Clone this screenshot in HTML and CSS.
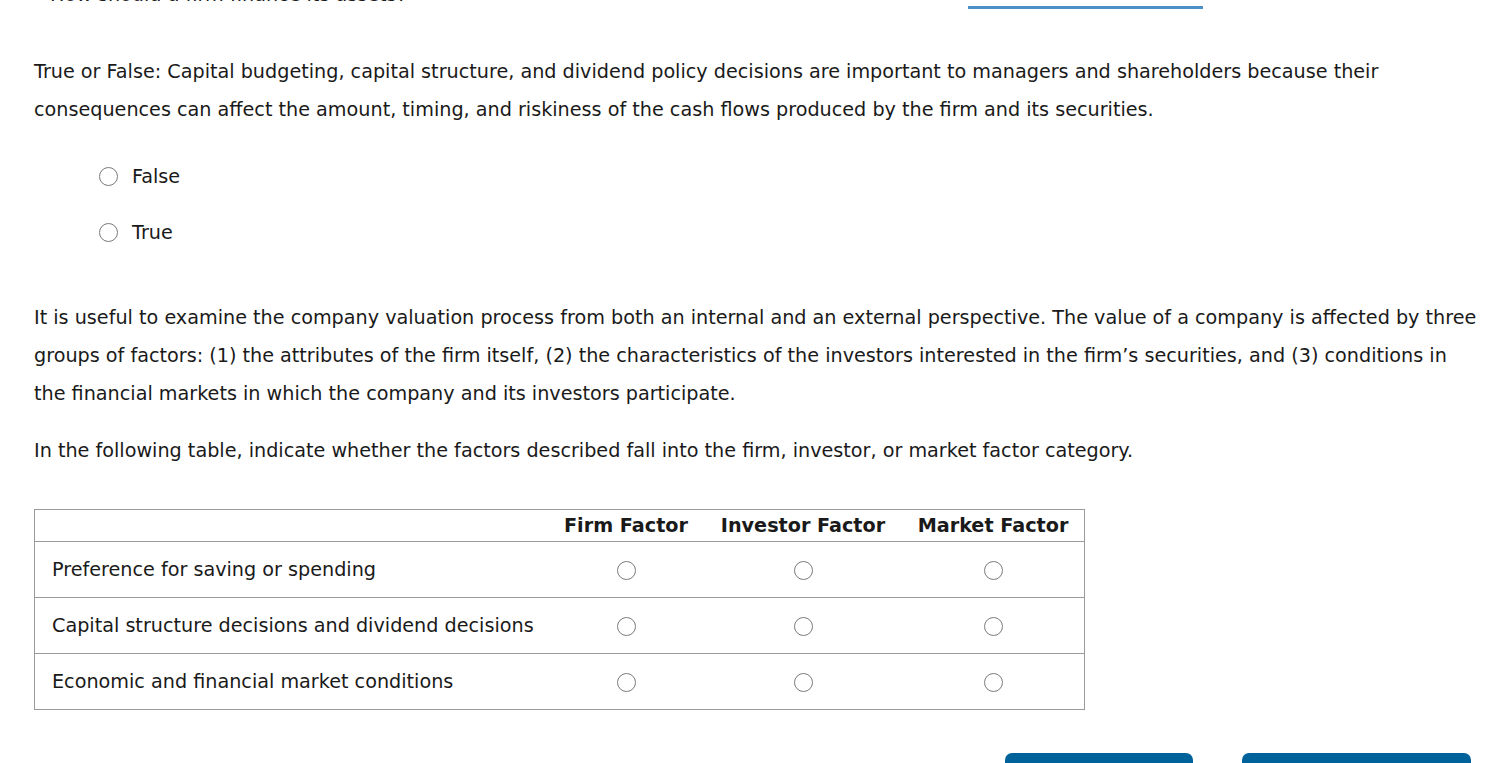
FILE: index.html
```html
<!DOCTYPE html>
<html lang="en">
<head>
<meta charset="utf-8">
<title>Valuation factors</title>
<link rel="stylesheet" href="styles.css">
</head>
<body>
<div class="page">
  <div class="prev">
    <span class="prev-q">How should a firm finance its assets?</span>
    <span class="tab-line"></span>
  </div>

  <div class="question first">
    <p class="stem">True or False: Capital budgeting, capital structure, and dividend policy decisions are important to managers and shareholders because their consequences can affect the amount, timing, and riskiness of the cash flows produced by the firm and its securities.</p>
    <div class="choices">
      <label class="choice"><span class="radio"></span><span>False</span></label>
      <label class="choice"><span class="radio"></span><span>True</span></label>
    </div>
  </div>

  <div class="question second">
    <p class="stem">It is useful to examine the company valuation process from both an internal and an external perspective. The value of a company is affected by three groups of factors: (1) the attributes of the firm itself, (2) the characteristics of the investors interested in the firm’s securities, and (3) conditions in the financial markets in which the company and its investors participate.</p>
    <p class="stem instr">In the following table, indicate whether the factors described fall into the firm, investor, or market factor category.</p>

    <table class="factors">
      <thead>
        <tr>
          <th class="c-label"></th>
          <th class="c-firm">Firm Factor</th>
          <th class="c-inv">Investor Factor</th>
          <th class="c-mkt">Market Factor</th>
        </tr>
      </thead>
      <tbody>
        <tr>
          <td class="label">Preference for saving or spending</td>
          <td><span class="radio"></span></td>
          <td><span class="radio"></span></td>
          <td><span class="radio"></span></td>
        </tr>
        <tr>
          <td class="label">Capital structure decisions and dividend decisions</td>
          <td><span class="radio"></span></td>
          <td><span class="radio"></span></td>
          <td><span class="radio"></span></td>
        </tr>
        <tr>
          <td class="label">Economic and financial market conditions</td>
          <td><span class="radio"></span></td>
          <td><span class="radio"></span></td>
          <td><span class="radio"></span></td>
        </tr>
      </tbody>
    </table>
  </div>

  <div class="actions">
    <button class="btn btn-grade" aria-label="Grade It Now"></button>
    <button class="btn btn-save" aria-label="Save and Continue"></button>
  </div>
</div>
</body>
</html>
```

FILE: styles.css
```css
html, body {
  margin: 0;
  padding: 0;
  background: #ffffff;
}

body {
  font-family: "DejaVu Sans", Verdana, sans-serif;
  font-size: 19.2px;
  color: #1a1a1a;
  overflow: hidden;
}

.page {
  width: 1496px;
}

.prev {
  display: flex;
  align-items: flex-start;
  height: 15px;
}

.prev-q {
  margin-left: 50px;
  margin-top: -15px;
  line-height: 20px;
}

.tab-line {
  margin-left: auto;
  margin-right: 293px;
  margin-top: 6px;
  width: 235px;
  height: 3px;
  background: #4b91c8;
}

.question {
  padding: 0 16px 0 34px;
}

.stem {
  margin: 0;
  line-height: 38px;
}

.first .stem {
  margin-top: 38px;
}

.choices {
  display: flex;
  flex-direction: column;
  gap: 18px;
  padding-left: 65px;
  margin-top: 28px;
}

.choice {
  display: flex;
  align-items: center;
  gap: 14px;
  height: 38px;
}

.radio {
  display: inline-block;
  box-sizing: border-box;
  width: 19px;
  height: 19px;
  border: 1.5px solid #7a7a7a;
  border-radius: 50%;
  background: #fff;
  vertical-align: middle;
}

.second {
  margin-top: 48px;
}

.instr {
  margin-top: 19px;
}

.factors {
  margin-top: 39px;
  border-collapse: collapse;
  width: 1051px;
  border: 1px solid #9a9a9a;
  font-size: 19.2px;
}

.factors th {
  height: 31px;
  padding: 0;
  font-weight: bold;
  text-align: center;
  border-bottom: 1px solid #9a9a9a;
  white-space: nowrap;
}

.c-label { width: 513px; }
.c-firm { width: 156px; }
.c-inv { width: 198px; }
.c-mkt { width: 182px; }

.factors td {
  height: 55px;
  padding: 0;
  text-align: center;
  border-bottom: 1px solid #9a9a9a;
}

.factors td.label {
  text-align: left;
  padding-left: 17px;
}

.actions {
  display: flex;
  justify-content: flex-end;
  gap: 49px;
  padding-right: 25px;
  margin-top: 43px;
}

.btn {
  height: 44px;
  border: none;
  border-radius: 7px;
  background: #00629b;
  padding: 0;
}

.btn-grade { width: 188px; }
.btn-save { width: 229px; }
```
